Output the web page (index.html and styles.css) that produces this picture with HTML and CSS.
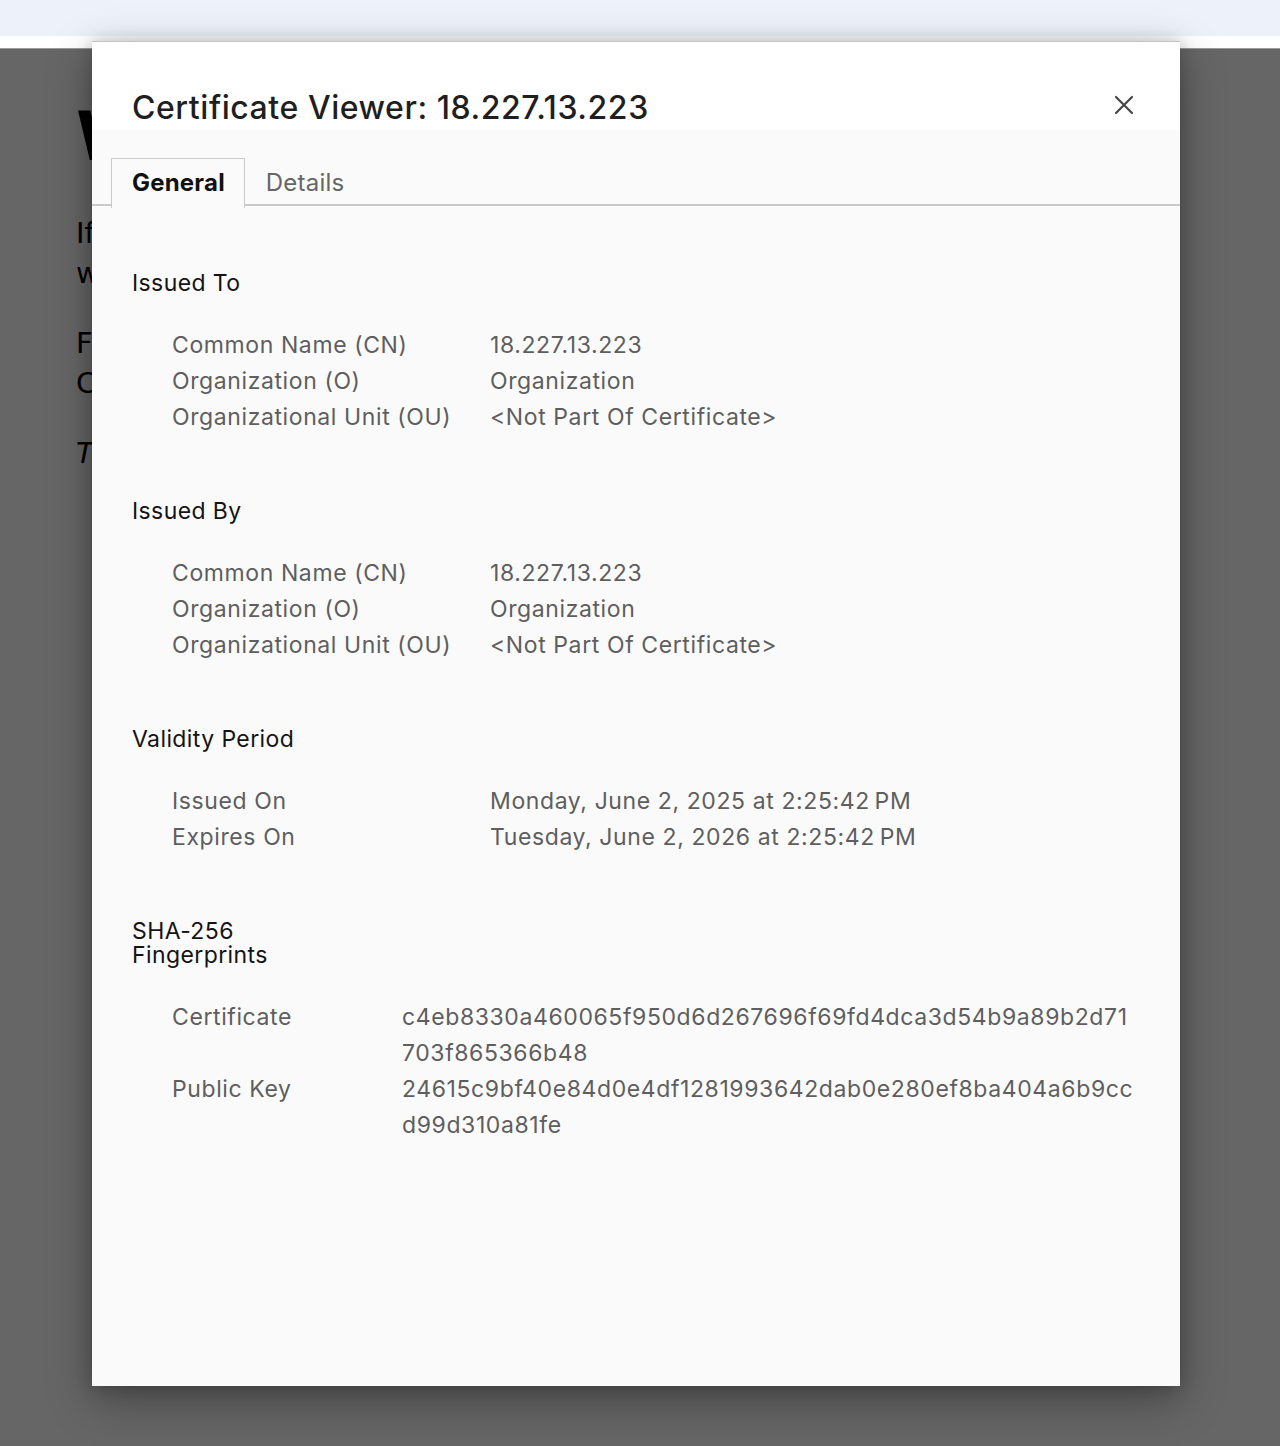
FILE: index.html
```html
<!DOCTYPE html>
<html lang="en">
<head>
<meta charset="utf-8">
<title>Certificate Viewer</title>
<link rel="stylesheet" href="styles.css">
</head>
<body>
<div class="chrome"></div>
<div class="strip"></div>
<main class="page">
  <h1 class="page-title">Welcome to nginx!</h1>
  <p class="page-p first">If you see this page, the nginx web server is successfully installed and<br>working. Further configuration is required.</p>
  <p class="page-p">For online documentation and support please refer to nginx.org.<br>Commercial support is available at nginx.com.</p>
  <p class="page-p"><em>Thank you for using nginx.</em></p>
</main>

<div class="dialog">
  <header class="dlg-head">
    <h2 class="dlg-title">Certificate Viewer: 18.227.13.223</h2>
    <button class="close" aria-label="Close">
      <svg width="20" height="20" viewBox="0 0 20 20"><path d="M2 2 L18 18 M18 2 L2 18" stroke="#474747" stroke-width="2.2" stroke-linecap="round" fill="none"/></svg>
    </button>
  </header>
  <div class="dlg-body">
    <div class="tabs">
      <div class="tab active">General</div>
      <div class="tab">Details</div>
    </div>
    <div class="content">
      <section class="sec">
        <h3 class="sec-h">Issued To</h3>
        <div class="grid">
          <div class="lbl">Common Name (CN)</div><div class="val">18.227.13.223</div>
          <div class="lbl">Organization (O)</div><div class="val">Organization</div>
          <div class="lbl">Organizational Unit (OU)</div><div class="val">&lt;Not Part Of Certificate&gt;</div>
        </div>
      </section>
      <section class="sec">
        <h3 class="sec-h">Issued By</h3>
        <div class="grid">
          <div class="lbl">Common Name (CN)</div><div class="val">18.227.13.223</div>
          <div class="lbl">Organization (O)</div><div class="val">Organization</div>
          <div class="lbl">Organizational Unit (OU)</div><div class="val">&lt;Not Part Of Certificate&gt;</div>
        </div>
      </section>
      <section class="sec">
        <h3 class="sec-h">Validity Period</h3>
        <div class="grid">
          <div class="lbl">Issued On</div><div class="val">Monday, June 2, 2025 at 2:25:42&#8239;PM</div>
          <div class="lbl">Expires On</div><div class="val">Tuesday, June 2, 2026 at 2:25:42&#8239;PM</div>
        </div>
      </section>
      <section class="sec">
        <h3 class="sec-h narrow">SHA-256 Fingerprints</h3>
        <div class="grid fp">
          <div class="lbl">Certificate</div><div class="val"><span class="ln">c4eb8330a460065f950d6d267696f69fd4dca3d54b9a89b2d71</span><span class="ln">703f865366b48</span></div>
          <div class="lbl">Public Key</div><div class="val"><span class="ln">24615c9bf40e84d0e4df1281993642dab0e280ef8ba404a6b9cc</span><span class="ln">d99d310a81fe</span></div>
        </div>
      </section>
    </div>
  </div>
</div>
</body>
</html>
```

FILE: styles.css
```css
* { box-sizing: border-box; }
html, body { margin: 0; padding: 0; }
body {
  background: #666666;
  width: 1280px;
  height: 1446px;
  overflow: hidden;
  position: relative;
  font-family: "DejaVu Sans", Verdana, sans-serif;
}
.chrome {
  height: 36px;
  background: #edf1f9;
}
.strip {
  height: 13px;
  background: #ffffff;
  border-bottom: 1px solid #9a9a9a;
}
.page {
  margin-left: 76px;
  padding-top: 48px;
  width: 16px;
  overflow: hidden;
  white-space: nowrap;
  color: #000;
}
.page-title {
  margin: 0;
  font-size: 68px;
  line-height: 80px;
  font-weight: bold;
}
.page-p {
  margin: 30px 0 0;
  font-size: 29px;
  line-height: 40px;
}
.page-p.first { margin-top: 36px; }

.dialog {
  position: absolute;
  left: 92px;
  top: 41px;
  width: 1088px;
  height: 1345px;
  background: #fafafa;
  border-top: 1px solid #c4c4c4;
  box-shadow: 0 14px 40px rgba(0, 0, 0, 0.35), 0 0 14px rgba(0, 0, 0, 0.18);
  font-family: Inter, "Noto Sans", sans-serif;
  display: flex;
  flex-direction: column;
}
.dlg-head {
  background: #ffffff;
  height: 88px;
  padding: 47px 40px 0 40px;
  display: flex;
  justify-content: space-between;
  align-items: flex-start;
}
.dlg-title {
  margin: 0;
  font-size: 32px;
  line-height: 38px;
  font-weight: 500;
  color: #1f1f1f;
  letter-spacing: 0.55px;
}
.close {
  margin: 6px 6px 0 0;
  padding: 0;
  border: 0;
  background: transparent;
  width: 20px;
  height: 20px;
  display: block;
}
.close svg { display: block; }

.dlg-body {
  flex: 1;
  padding-top: 28px;
}
.tabs {
  display: flex;
  padding-left: 19px;
  border-bottom: 2px solid #cacaca;
  height: 48px;
}
.tab {
  height: 48px;
  padding: 0 20px;
  border: 1px solid transparent;
  border-bottom: 0;
  font-size: 24px;
  line-height: 47px;
  letter-spacing: 0.2px;
  color: #666666;
}
.tab.active {
  padding: 0 19px 0 20px;
  border-color: #cacaca;
  background: #fafafa;
  color: #111111;
  font-weight: 700;
  height: 50px;
  margin-bottom: -2px;
}

.content {
  padding: 65px 40px 0 40px;
}
.sec + .sec { margin-top: 64px; }
.sec-h {
  margin: 0;
  font-size: 23px;
  line-height: 24px;
  font-weight: 400;
  letter-spacing: 0.4px;
  color: #141414;
}
.sec-h.narrow { width: 180px; }
.grid {
  margin-top: 32px;
  padding-left: 40px;
  display: grid;
  grid-template-columns: 318px 1fr;
  font-size: 23px;
  line-height: 36px;
  letter-spacing: 0.6px;
  color: #5e5e5e;
}
.grid.fp { grid-template-columns: 230px 1fr; }
.ln { display: block; white-space: nowrap; }
```
